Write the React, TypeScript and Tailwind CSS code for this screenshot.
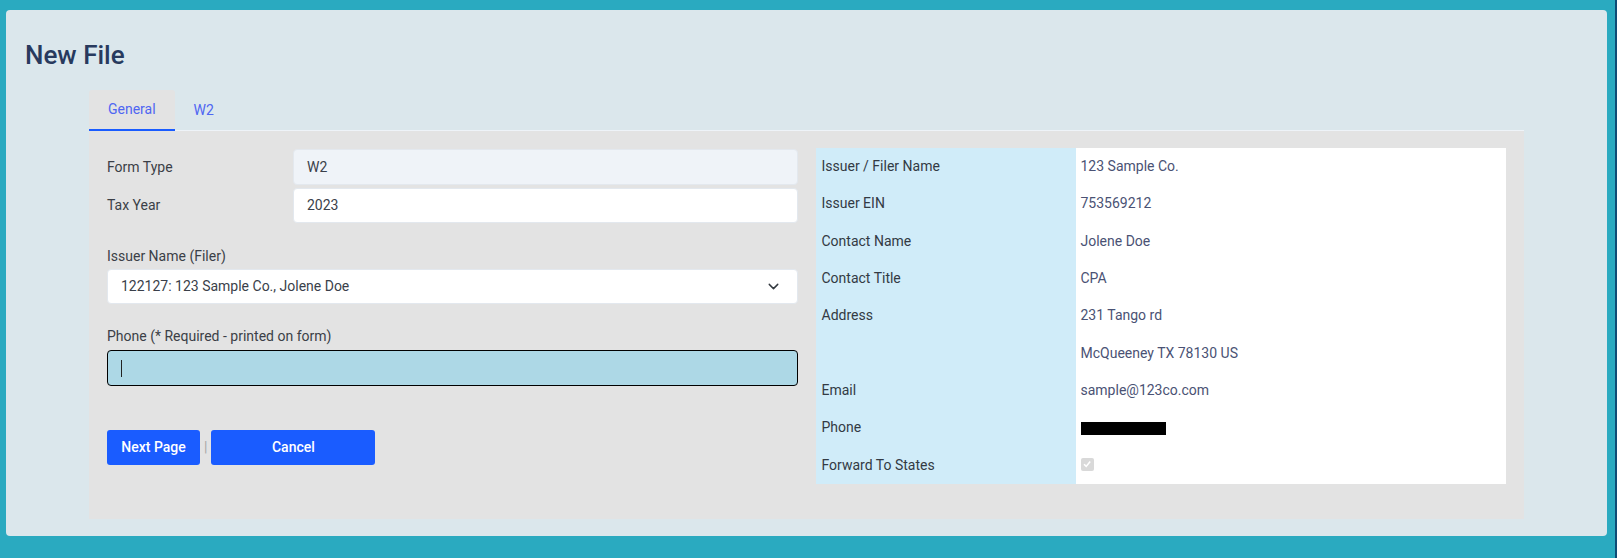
import React from 'react';
import { ChevronDown } from 'lucide-react';

const font = { fontFamily: 'Roboto, "Liberation Sans", sans-serif' };

const InfoRow: React.FC<{ label: string; children?: React.ReactNode }> = ({ label, children }) => (
  <div className="flex flex-1">
    <div className="w-[260px] flex items-center pl-[6px] bg-[#d0ecf9] text-[14px] text-[#333a44]">{label}</div>
    <div className="flex-1 flex items-center pl-[5px] text-[14px] text-[#4a5274]">{children}</div>
  </div>
);

const NewFilePage: React.FC = () => {
  return (
    <div className="w-full h-[558px] bg-[#2aaac0] flex" style={font}>
      <div className="flex-1 pt-[10px] pl-[6px] pr-[8px]">
        <div className="h-[526px] bg-[#dbe7ec] rounded-[4px] px-[19px] pt-[29px] pb-[17px] flex flex-col">
          <h1 className="h-[32px] leading-[32px] text-[26px] font-medium text-[#283a5e]">New File</h1>

          <div className="mx-[64px] mt-[19px] flex-1 flex flex-col">
            {/* tabs */}
            <div className="flex h-[41px] border-b border-[#eef3f8]">
              <div className="px-[19px] flex items-center bg-[#e3e3e3] border-b-2 border-[#1a5cff] -mb-px text-[14px] text-[#4f66f2] rounded-t-[3px]">
                General
              </div>
              <div className="px-[19px] flex items-center text-[14px] text-[#4f66f2]">W2</div>
            </div>

            <div className="flex-1 bg-[#e3e3e3] pt-[17px] px-[18px] grid grid-cols-2 gap-[18px] items-start">
              {/* left form */}
              <div className="pt-[1px] text-[14px] text-[#3b3f47]">
                <div className="flex items-center">
                  <div className="w-[186px]">Form Type</div>
                  <div className="flex-1 h-[36px] flex items-center px-[13px] bg-[#eff3f8] border border-[#e3e8ee] rounded-[4px] text-[#3a3f4a]">
                    W2
                  </div>
                </div>
                <div className="flex items-center mt-[3px]">
                  <div className="w-[186px]">Tax Year</div>
                  <div className="flex-1 h-[35px] flex items-center px-[13px] bg-white border border-[#e3e8ee] rounded-[4px] text-[#3a3f4a]">
                    2023
                  </div>
                </div>

                <div className="mt-[23px] leading-[20px]">Issuer Name (Filer)</div>
                <div className="mt-[3px] h-[35px] flex items-center justify-between pl-[13px] pr-[15px] bg-white border border-[#e3e8ee] rounded-[4px] text-[#3a3f4a]">
                  <span>122127: 123 Sample Co., Jolene Doe</span>
                  <ChevronDown size={17} strokeWidth={2} className="text-[#343a40]" />
                </div>

                <div className="mt-[22px] leading-[20px]">Phone (* Required - printed on form)</div>
                <div className="mt-[4px] h-[36px] flex items-center pl-[13px] bg-[#add8e6] border border-black rounded-[4px]">
                  <span className="w-px h-[17px] bg-[#222]" />
                </div>

                <div className="mt-[44px] flex items-center">
                  <button className="h-[35px] w-[93px] bg-[#1a5cff] text-white font-medium text-[14px] rounded-[3px]">
                    Next Page
                  </button>
                  <span className="mx-[4px] text-[#a8a8a8] text-[14px]">|</span>
                  <button className="h-[35px] w-[164px] bg-[#1a5cff] text-white font-medium text-[14px] rounded-[3px]">
                    Cancel
                  </button>
                </div>
              </div>

              {/* right info table */}
              <div className="bg-white h-[336px] flex flex-col">
                <InfoRow label="Issuer / Filer Name">123 Sample Co.</InfoRow>
                <InfoRow label="Issuer EIN">753569212</InfoRow>
                <InfoRow label="Contact Name">Jolene Doe</InfoRow>
                <InfoRow label="Contact Title">CPA</InfoRow>
                <InfoRow label="Address">231 Tango rd</InfoRow>
                <InfoRow label="">McQueeney TX 78130 US</InfoRow>
                <InfoRow label="Email">sample@123co.com</InfoRow>
                <InfoRow label="Phone">
                  <span className="block w-[85px] h-[13px] bg-black mt-[2px]" />
                </InfoRow>
                <InfoRow label="Forward To States">
                  <span className="w-[13px] h-[13px] rounded-[2px] bg-[#d9d9d9] flex items-center justify-center -mt-[2px]">
                    <svg width="10" height="10" viewBox="0 0 10 10">
                      <path d="M2 5.2 L4.2 7.4 L8.2 2.6" fill="none" stroke="#fff" strokeWidth="1.6" />
                    </svg>
                  </span>
                </InfoRow>
              </div>
            </div>
          </div>
        </div>
      </div>
      <div className="w-[2px] bg-[#0e4c76]" />
    </div>
  );
};

export default function App() {
  return <NewFilePage />;
}
